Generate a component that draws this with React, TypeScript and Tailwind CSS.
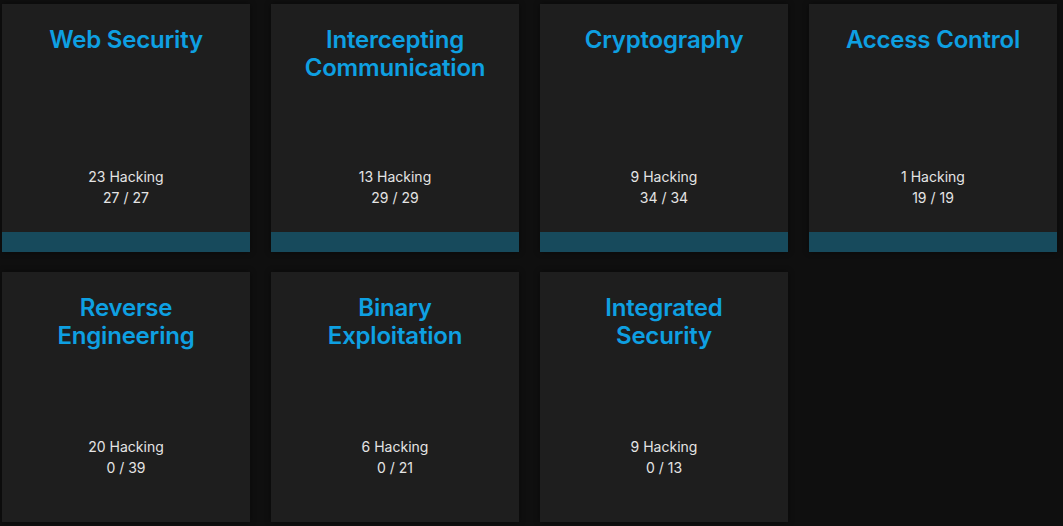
import React from "react";

type Cat = { title: string[]; hacking: number; done: number; total: number };

const cats: Cat[] = [
  { title: ["Web Security"], hacking: 23, done: 27, total: 27 },
  { title: ["Intercepting", "Communication"], hacking: 13, done: 29, total: 29 },
  { title: ["Cryptography"], hacking: 9, done: 34, total: 34 },
  { title: ["Access Control"], hacking: 1, done: 19, total: 19 },
  { title: ["Reverse", "Engineering"], hacking: 20, done: 0, total: 39 },
  { title: ["Binary", "Exploitation"], hacking: 6, done: 0, total: 21 },
  { title: ["Integrated", "Security"], hacking: 9, done: 0, total: 13 },
];

function Card({ c, first }: { c: Cat; first: boolean }) {
  const complete = c.done === c.total;
  return (
    <div
      className={`flex flex-col bg-[#1e1e1e] shadow-[0_0_6px_rgba(0,0,0,0.45)] ${
        first ? "h-[248px]" : "h-[250px]"
      }`}
    >
      <div className="flex flex-1 flex-col items-center pt-[22px] text-center">
        <div className="text-[24px] font-semibold leading-[28px] text-[#0ea0e2] tracking-[-0.2px]">
          {c.title.map((t) => (
            <div key={t}>{t}</div>
          ))}
        </div>
        <div className="flex-1" />
        <div className="pb-[24px] text-[14px] leading-[21px] text-[#e4e4e4]">
          <div>{c.hacking} Hacking</div>
          <div>
            {c.done} / {c.total}
          </div>
        </div>
      </div>
      <div className={`h-[20px] ${complete ? "bg-[#174a5c]" : ""}`} />
    </div>
  );
}

export default function App() {
  return (
    <div
      className="min-h-[526px] w-full bg-[#0f0f0f]"
      style={{ fontFamily: "Inter, 'Noto Sans', sans-serif" }}
    >
      <div className="grid grid-cols-[repeat(4,248px)] gap-x-[21px] gap-y-[20px] pl-[2px] pt-[4px]">
        {cats.map((c, i) => (
          <Card key={i} c={c} first={i < 4} />
        ))}
      </div>
    </div>
  );
}
